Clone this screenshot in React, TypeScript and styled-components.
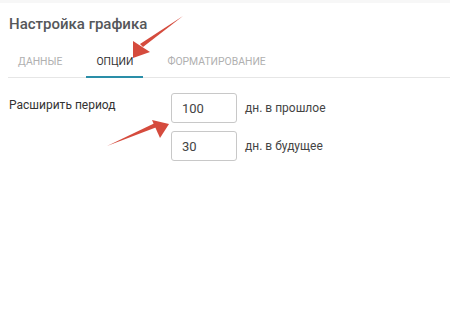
import React from 'react';
import styled, { createGlobalStyle } from 'styled-components';

const GlobalStyle = createGlobalStyle`
    html, body {
        margin: 0;
        padding: 0;
        background: #fff;
    }
    body {
        font-family: Roboto, "Liberation Sans", sans-serif;
    }
`;

const Screen = styled.div`
    position: relative;
    width: 450px;
    height: 322px;
    overflow: hidden;
    background: #fff;
    border-top: 3px solid #f7f7f7;
    box-sizing: border-box;
`;

const Title = styled.h2`
    margin: 0;
    padding: 11px 0 0 9px;
    font-size: 15px;
    font-weight: 500;
    color: #55575a;
    line-height: 20px;
`;

const TabBar = styled.div`
    display: flex;
    gap: 14px;
    margin: 21px 0 0 8px;
    border-bottom: 1px solid #e6e6e6;
`;

const Tab = styled.div<{ active?: boolean }>`
    padding: 0 10px 8px;
    font-size: 10.4px;
    line-height: 13px;
    text-transform: uppercase;
    color: ${p => (p.active ? '#333' : '#b0b0b0')};
    border-bottom: 2px solid ${p => (p.active ? '#2a8ea8' : 'transparent')};
    margin-bottom: -1px;
`;

const Row = styled.div`
    display: flex;
    align-items: flex-start;
    padding: 15px 0 0 9px;
`;

const Label = styled.div`
    width: 162px;
    font-size: 12px;
    line-height: 14px;
    color: #333;
    padding-top: 5px;
`;

const Fields = styled.div`
    display: flex;
    flex-direction: column;
    gap: 8px;
`;

const Field = styled.div`
    display: flex;
    align-items: center;
    gap: 8px;
`;

const Input = styled.div`
    width: 66px;
    height: 30px;
    box-sizing: border-box;
    border: 1px solid #c8c8c8;
    border-radius: 3px;
    padding: 0 10px;
    display: flex;
    align-items: center;
    font-size: 13px;
    color: #444;
`;

const Unit = styled.span`
    font-size: 12px;
    color: #444;
`;

const Overlay = styled.svg`
    position: absolute;
    left: 0;
    top: 0;
    pointer-events: none;
`;

const ARROW = '#d54b3d';

export default function App() {
    return (
        <>
            <GlobalStyle />
            <Screen>
                <Title>Настройка графика</Title>
                <TabBar>
                    <Tab>Данные</Tab>
                    <Tab active>Опции</Tab>
                    <Tab>Форматирование</Tab>
                </TabBar>
                <Row>
                    <Label>Расширить период</Label>
                    <Fields>
                        <Field>
                            <Input>100</Input>
                            <Unit>дн. в прошлое</Unit>
                        </Field>
                        <Field>
                            <Input>30</Input>
                            <Unit>дн. в будущее</Unit>
                        </Field>
                    </Fields>
                </Row>
                <Overlay width="450" height="322">
                    {/* arrow to the tab */}
                    <polygon points="183,13 143,44 140,41" fill={ARROW} />
                    <polygon points="133,38 150,49 133,55" fill={ARROW} />
                    {/* arrow to the first field */}
                    <polygon points="107,143 157,124 155,120" fill={ARROW} />
                    <polygon points="152,117 169,121 160,135" fill={ARROW} />
                </Overlay>
            </Screen>
        </>
    );
}
